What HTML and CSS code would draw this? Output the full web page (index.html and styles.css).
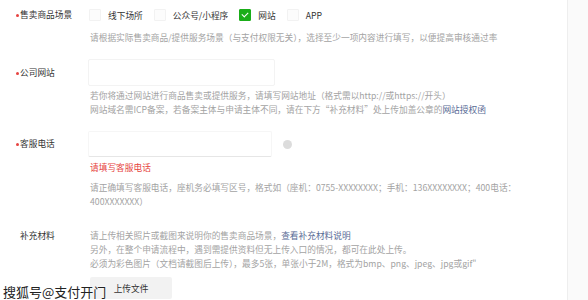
FILE: index.html
```html
<!DOCTYPE html>
<html lang="zh-CN">
<head>
    <meta charset="UTF-8">
    <meta name="viewport" content="width=device-width, initial-scale=1.0">
    <title>经营信息</title>
    <link rel="stylesheet" href="styles.css">
</head>
<body>

    <div class="page">
        <div class="main">
            <div class="form">

                <div class="field">
                    <div class="label required">售卖商品场景</div>
                    <div class="content">
                        <div class="options">
                            <label class="option"><span class="checkbox"></span>线下场所</label>
                            <label class="option"><span class="checkbox"></span>公众号/小程序</label>
                            <label class="option"><span class="checkbox checked"></span>网站</label>
                            <label class="option"><span class="checkbox"></span>APP</label>
                        </div>
                        <p class="hint hint-first">请根据实际售卖商品/提供服务场景（与支付权限无关），选择至少一项内容进行填写，以便提高审核通过率</p>
                    </div>
                </div>

                <div class="field field-site">
                    <div class="label label-input required">公司网站</div>
                    <div class="content">
                        <input type="text" class="text-input">
                        <p class="hint hint-input">若你将通过网站进行商品售卖或提供服务，请填写网站地址（格式需以http://或https://开头）</p>
                        <p class="hint">网站域名需ICP备案，若备案主体与申请主体不同，请在下方“补充材料”处上传加盖公章的<a href="#">网站授权函</a></p>
                    </div>
                </div>

                <div class="field field-phone">
                    <div class="label label-input required">客服电话</div>
                    <div class="content">
                        <div class="input-row">
                            <input type="text" class="text-input text-input-error">
                            <span class="clear-icon"></span>
                        </div>
                        <p class="error-text">请填写客服电话</p>
                        <p class="hint hint-phone">请正确填写客服电话，座机务必填写区号，格式如（座机：0755-XXXXXXXX；手机：136XXXXXXXX；400电话：400XXXXXXX）</p>
                    </div>
                </div>

                <div class="field field-material">
                    <div class="label">补充材料</div>
                    <div class="content">
                        <p class="hint">请上传相关照片或截图来说明你的售卖商品场景，<a href="#">查看补充材料说明</a></p>
                        <p class="hint">另外，在整个申请流程中，遇到需提供资料但无上传入口的情况，都可在此处上传。</p>
                        <p class="hint">必须为彩色图片（文档请截图后上传），最多5张，单张小于2M，格式为bmp、png、jpeg、jpg或gif"</p>
                        <button class="btn-upload">上传文件</button>
                    </div>
                </div>

            </div>
        </div>
        <div class="side"></div>
    </div>

    <div class="watermark">搜狐号@支付开门</div>

</body>
</html>
```

FILE: styles.css
```css
body {
    margin: 0;
    font-family: "Noto Sans CJK SC", "Noto Sans", sans-serif;
    font-size: 8.7px;
    color: #333;
    background-color: #fafafa;
    overflow: hidden;
}

.page {
    display: flex;
    height: 100vh;
}

.main {
    width: 567px;
    background-color: #fff;
    border-right: 1px solid #eee;
}

.side {
    flex: 1;
    background-color: #fafafa;
}

.form {
    padding: 5px 0 0 16px;
}

.field {
    display: grid;
    grid-template-columns: 74px 1fr;
    align-items: start;
}

.label {
    line-height: 20px;
    padding-left: 4px;
    color: #333;
}

.label.required::before {
    content: "";
    display: inline-block;
    width: 3px;
    height: 3px;
    margin-left: -4px;
    margin-right: 1px;
    border-radius: 50%;
    background-color: #e64340;
    vertical-align: middle;
}

.content p {
    margin: 0;
}

.options {
    display: flex;
    align-items: center;
    height: 20px;
    margin-left: -1px;
}

.option {
    display: flex;
    align-items: center;
    margin-right: 11px;
    color: #333;
}

.checkbox {
    width: 10px;
    height: 10px;
    margin-right: 7px;
    border: 1px solid #f2f2f2;
    border-radius: 1px;
    background-color: #fcfcfc;
    position: relative;
}

.checkbox.checked {
    border-color: #1aad19;
    background-color: #1aad19;
}

.checkbox.checked::after {
    content: "";
    position: absolute;
    left: 3px;
    top: 1px;
    width: 3px;
    height: 5px;
    border: solid #fff;
    border-width: 0 1px 1px 0;
    transform: rotate(45deg);
}

.hint {
    color: #a3a3a3;
    line-height: 14px;
}

.hint a,
.hint a:visited {
    color: #576b95;
    text-decoration: none;
}

.hint-first {
    margin-top: 6px !important;
}

/* text inputs */
.field-site {
    margin-top: 14px;
}

.label-input {
    line-height: 27px;
}

.text-input {
    display: block;
    box-sizing: border-box;
    width: 187px;
    height: 27px;
    margin: 0 0 0 -2px;
    padding: 0 8px;
    border: 1px solid #f3f3f3;
    border-radius: 2px;
    background-color: #fff;
    outline: none;
}

.hint-input {
    margin-top: 3px !important;
}

.field-phone {
    margin-top: 14px;
}

.field-phone .label-input {
    line-height: 26px;
}

.input-row {
    display: flex;
    align-items: center;
}

.text-input-error {
    width: 184px;
    height: 26px;
    border-color: #f6f6f6;
    border-bottom-color: #e6e6e6;
}

.clear-icon {
    width: 9px;
    height: 9px;
    margin-left: 11px;
    border-radius: 50%;
    background-color: #dcdcdc;
}

.error-text {
    margin-top: 4px !important;
    line-height: 14px;
    color: #e64340;
}

.hint-phone {
    margin-top: 6px !important;
    width: 448px;
}

/* supplementary material */
.field-material {
    margin-top: 20px;
}

.field-material .label {
    line-height: 14px;
}

.btn-upload {
    display: block;
    width: 82px;
    height: 22px;
    margin-top: 6px;
    border: none;
    border-radius: 2px;
    background-color: #f2f2f2;
    color: #333;
    font-family: inherit;
    font-size: 8.7px;
}

.watermark {
    position: absolute;
    left: 3px;
    bottom: 0;
    font-size: 13px;
    line-height: 16px;
    color: #222;
    text-shadow: 0 0 2px #fff, 0 0 2px #fff;
}
```
